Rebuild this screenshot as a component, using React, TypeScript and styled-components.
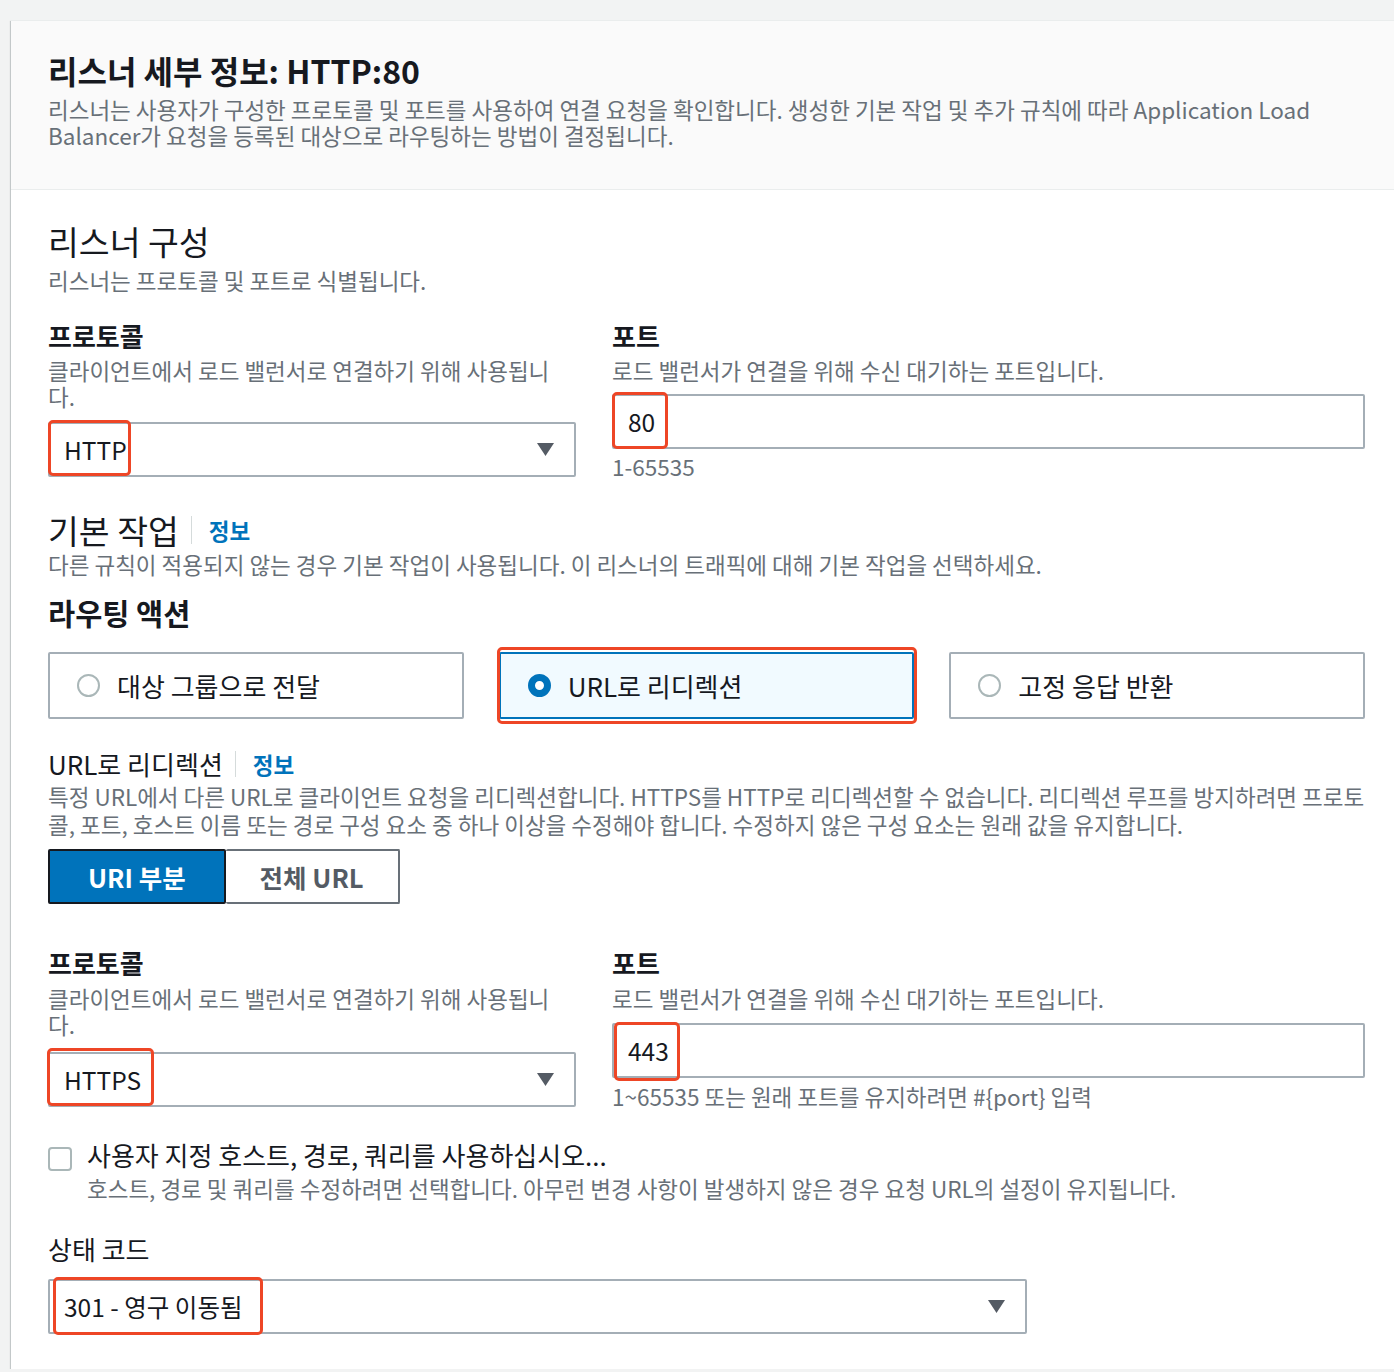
import React from 'react';
import styled, { createGlobalStyle } from 'styled-components';

const GlobalStyle = createGlobalStyle`
  html, body {
    margin: 0;
    padding: 0;
    background: #f2f3f3;
    overflow: hidden;
  }

  body {
    font-family: 'Noto Sans CJK KR', 'Noto Sans', sans-serif;
    color: #16191f;
  }

  * {
    box-sizing: border-box;
  }
`;

const Page = styled.div`
  padding: 20px 0 0 11px;
`;

const Card = styled.section`
  width: 1390px;
  background: #ffffff;
  box-shadow: 0 1px 1px 0 rgba(0, 28, 36, 0.3), 1px 1px 1px 0 rgba(0, 28, 36, 0.15),
    -1px 1px 1px 0 rgba(0, 28, 36, 0.15);
  border-top: 1px solid #eaeded;
`;

const CardHeader = styled.header`
  background: #fafafa;
  padding: 29px 36px 41px 37px;
  border-bottom: 1px solid #eaeded;
`;

const Title = styled.h1`
  margin: 0;
  font-size: 32px;
  line-height: 40px;
  font-weight: 700;
`;

const Desc = styled.p<{ $mt?: number; $lh?: number }>`
  margin: ${(p) => p.$mt ?? 0}px 0 0;
  font-size: 22.5px;
  line-height: ${(p) => p.$lh ?? 26}px;
  color: #687078;
`;

const CardBody = styled.div`
  padding: 31px 36px 35px 37px;
`;

const Heading = styled.h2<{ $mt?: number; $size?: number; $lh?: number; $bold?: boolean }>`
  margin: ${(p) => p.$mt ?? 0}px 0 0;
  font-size: ${(p) => p.$size ?? 33.5}px;
  line-height: ${(p) => p.$lh ?? 40}px;
  font-weight: ${(p) => (p.$bold ? 700 : 400)};
`;

const InfoHeading = styled.div<{ $mt: number }>`
  margin-top: ${(p) => p.$mt}px;
  display: flex;
  align-items: center;

  h2 {
    margin: 0;
  }
`;

const Divider = styled.span<{ $h: number }>`
  width: 1px;
  height: ${(p) => p.$h}px;
  background: #d5dbdb;
  margin: 0 17px 0 12px;
`;

const InfoLink = styled.a`
  font-size: 22.5px;
  font-weight: 700;
  color: #0073bb;
  text-decoration: none;
`;

const FieldGrid = styled.div<{ $mt: number }>`
  margin-top: ${(p) => p.$mt}px;
  display: grid;
  grid-template-columns: 528px 1fr;
  column-gap: 36px;
  align-items: start;
`;

const Field = styled.div`
  display: flex;
  flex-direction: column;
`;

const Label = styled.label`
  font-size: 26px;
  line-height: 32px;
  font-weight: 700;
`;

const Hint = styled.div<{ $mt: number }>`
  margin-top: ${(p) => p.$mt}px;
  font-size: 22.5px;
  line-height: 26px;
  color: #687078;
`;

const Box = styled.div<{ $mt: number; $w?: number }>`
  position: relative;
  margin-top: ${(p) => p.$mt}px;
  width: ${(p) => (p.$w ? `${p.$w}px` : '100%')};
  height: 55px;
  border: 2px solid #a4aeb6;
  border-radius: 2px;
  background: #ffffff;
  display: flex;
  align-items: center;
  padding: 0 20px 0 14px;
  font-size: 24.5px;
  color: #16191f;
`;

const Value = styled.span`
  flex: 1;
`;

const Mark = styled.span<{ $l: number; $t: number; $w: number; $h: number }>`
  position: absolute;
  left: ${(p) => p.$l}px;
  top: ${(p) => p.$t}px;
  width: ${(p) => p.$w}px;
  height: ${(p) => p.$h}px;
  border: 3px solid #ee4626;
  border-radius: 5px;
  pointer-events: none;
`;

const Caret = () => (
  <svg width="17" height="13" viewBox="0 0 17 13">
    <polygon points="0,0 17,0 8.5,13" fill="#545b64" />
  </svg>
);

const TileGrid = styled.div`
  margin-top: 22px;
  display: grid;
  grid-template-columns: repeat(3, 1fr);
  column-gap: 35px;
`;

const Tile = styled.div<{ $selected?: boolean }>`
  position: relative;
  height: 67px;
  display: flex;
  align-items: center;
  padding-left: 27px;
  border: 2px solid ${(p) => (p.$selected ? '#0073bb' : '#a4aeb6')};
  border-radius: 2px;
  background: ${(p) => (p.$selected ? '#f1faff' : '#ffffff')};
  font-size: 26px;
`;

const Radio = styled.span<{ $checked?: boolean }>`
  width: 23px;
  height: 23px;
  border-radius: 50%;
  border: ${(p) => (p.$checked ? '7px solid #0073bb' : '2px solid #aab7b8')};
  background: #ffffff;
  margin-right: 17px;
  flex-shrink: 0;
`;

const Segmented = styled.div`
  margin-top: 11px;
  display: flex;
  height: 55px;
`;

const Segment = styled.button<{ $active?: boolean }>`
  height: 55px;
  padding: 0 ${(p) => (p.$active ? 38 : 34)}px;
  font-family: inherit;
  font-size: 25.5px;
  font-weight: 700;
  color: ${(p) => (p.$active ? '#ffffff' : '#545b64')};
  background: ${(p) => (p.$active ? '#0073bb' : '#ffffff')};
  border: 2px solid ${(p) => (p.$active ? '#16191f' : '#687078')};
  border-left-width: ${(p) => (p.$active ? 2 : 0)}px;
  border-radius: 2px;
  cursor: pointer;
`;

const CheckRow = styled.div`
  margin-top: 30px;
  display: flex;
  align-items: flex-start;
`;

const Checkbox = styled.span`
  width: 24px;
  height: 24px;
  margin-top: 8px;
  margin-right: 15px;
  border: 2px solid #aab7b8;
  border-radius: 4px;
  flex-shrink: 0;
`;

const CheckText = styled.div`
  display: flex;
  flex-direction: column;
`;

const CheckLabel = styled.div`
  font-size: 26px;
  line-height: 32px;
`;

const App = () => {
  return (
    <>
      <GlobalStyle />
      <Page>
        <Card>
          <CardHeader>
            <Title>리스너 세부 정보: HTTP:80</Title>
            <Desc $mt={6}>
              리스너는 사용자가 구성한 프로토콜 및 포트를 사용하여 연결 요청을 확인합니다. 생성한 기본 작업 및 추가
              규칙에 따라 Application Load Balancer가 요청을 등록된 대상으로 라우팅하는 방법이 결정됩니다.
            </Desc>
          </CardHeader>

          <CardBody>
            <Heading>리스너 구성</Heading>
            <Desc $mt={6}>리스너는 프로토콜 및 포트로 식별됩니다.</Desc>

            <FieldGrid $mt={27}>
              <Field>
                <Label>프로토콜</Label>
                <Desc $mt={5}>클라이언트에서 로드 밸런서로 연결하기 위해 사용됩니다.</Desc>
                <Box $mt={13}>
                  <Value>HTTP</Value>
                  <Caret />
                  <Mark $l={-2} $t={-4} $w={83} $h={56} />
                </Box>
              </Field>
              <Field>
                <Label>포트</Label>
                <Desc $mt={5}>로드 밸런서가 연결을 위해 수신 대기하는 포트입니다.</Desc>
                <Box $mt={11}>
                  <Value>80</Value>
                  <Mark $l={-2} $t={-4} $w={56} $h={57} />
                </Box>
                <Hint $mt={4}>1-65535</Hint>
              </Field>
            </FieldGrid>

            <InfoHeading $mt={34}>
              <Heading $lh={34}>기본 작업</Heading>
              <Divider $h={28} />
              <InfoLink>정보</InfoLink>
            </InfoHeading>
            <Desc $mt={4}>
              다른 규칙이 적용되지 않는 경우 기본 작업이 사용됩니다. 이 리스너의 트래픽에 대해 기본 작업을 선택하세요.
            </Desc>

            <Heading $mt={17} $size={29.5} $lh={36} $bold>
              라우팅 액션
            </Heading>

            <TileGrid>
              <Tile>
                <Radio />
                대상 그룹으로 전달
              </Tile>
              <Tile $selected>
                <Radio $checked />
                URL로 리디렉션
                <Mark $l={-4} $t={-7} $w={420} $h={77} />
              </Tile>
              <Tile>
                <Radio />
                고정 응답 반환
              </Tile>
            </TileGrid>

            <InfoHeading $mt={29}>
              <Heading $size={26} $lh={32}>
                URL로 리디렉션
              </Heading>
              <Divider $h={26} />
              <InfoLink>정보</InfoLink>
            </InfoHeading>
            <Desc $mt={2} $lh={28}>
              특정 URL에서 다른 URL로 클라이언트 요청을 리디렉션합니다. HTTPS를 HTTP로 리디렉션할 수 없습니다. 리디렉션
              루프를 방지하려면 프로토콜, 포트, 호스트 이름 또는 경로 구성 요소 중 하나 이상을 수정해야 합니다. 수정하지
              않은 구성 요소는 원래 값을 유지합니다.
            </Desc>

            <Segmented>
              <Segment $active>URI 부분</Segment>
              <Segment>전체 URL</Segment>
            </Segmented>

            <FieldGrid $mt={43}>
              <Field>
                <Label>프로토콜</Label>
                <Desc $mt={6}>클라이언트에서 로드 밸런서로 연결하기 위해 사용됩니다.</Desc>
                <Box $mt={15}>
                  <Value>HTTPS</Value>
                  <Caret />
                  <Mark $l={-3} $t={-6} $w={107} $h={58} />
                </Box>
              </Field>
              <Field>
                <Label>포트</Label>
                <Desc $mt={6}>로드 밸런서가 연결을 위해 수신 대기하는 포트입니다.</Desc>
                <Box $mt={12}>
                  <Value>443</Value>
                  <Mark $l={0} $t={-3} $w={66} $h={59} />
                </Box>
                <Hint $mt={5}>1~65535 또는 원래 포트를 유지하려면 #&#123;port&#125; 입력</Hint>
              </Field>
            </FieldGrid>

            <CheckRow>
              <Checkbox />
              <CheckText>
                <CheckLabel>사용자 지정 호스트, 경로, 쿼리를 사용하십시오...</CheckLabel>
                <Desc $mt={4}>
                  호스트, 경로 및 쿼리를 수정하려면 선택합니다. 아무런 변경 사항이 발생하지 않은 경우 요청 URL의 설정이
                  유지됩니다.
                </Desc>
              </CheckText>
            </CheckRow>

            <Heading $mt={32} $size={26} $lh={32}>
              상태 코드
            </Heading>
            <Box $mt={14} $w={979}>
              <Value>301 - 영구 이동됨</Value>
              <Caret />
              <Mark $l={3} $t={-4} $w={210} $h={58} />
            </Box>
          </CardBody>
        </Card>
      </Page>
    </>
  );
};

export default App;
